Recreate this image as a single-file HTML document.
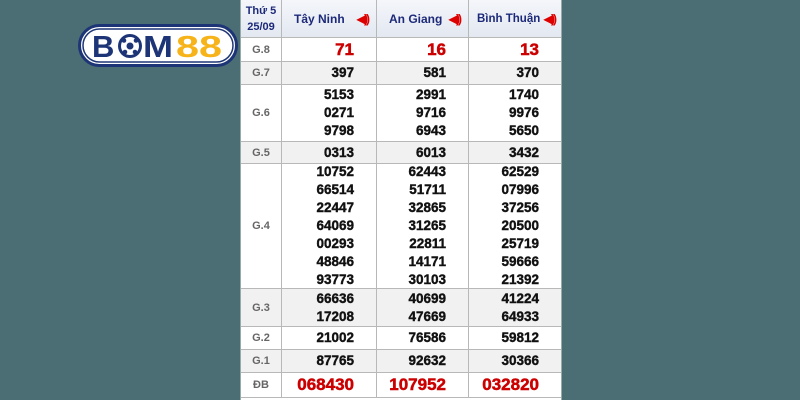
<html><head><style>
body{margin:0;width:800px;height:400px;background:#4b6d74;position:relative;overflow:hidden;font-family:"Liberation Sans",Arial,sans-serif}
.t{position:absolute;left:240px;top:0;width:320px;height:400px;background:#fff;border-left:1px solid #9aa;border-right:1px solid #9aa}
.r{position:absolute;left:0;width:320px;border-bottom:1px solid #b8b8b8;box-sizing:border-box}
.g{background:#f1f1f1}
.c{position:absolute;top:0;bottom:0;border-left:1px solid #b8b8b8;box-sizing:border-box;padding-right:22px;display:flex;align-items:center;justify-content:flex-end}
.c div{text-align:right;font-weight:700;font-size:13.5px;color:#111;line-height:18px;-webkit-text-stroke:0.4px #111}
.l{position:absolute;left:0;width:40px;top:0;bottom:0;display:flex;align-items:center;justify-content:center;font-size:11px;color:#666;font-weight:bold}
.c1{left:40px;width:95px}.c2{left:135px;width:92px}.c3{left:227px;width:93px}
.c div.red{color:#c00;font-size:17px;-webkit-text-stroke:0.5px #c00}
.h{background:linear-gradient(#f4f6fa,#e3e8f1)}
.h .c{justify-content:space-between;padding:0 8px 0 12px;font-size:12px;font-weight:bold;color:#1d2a7a;white-space:nowrap}
.spk{color:#d00;font-size:12px;letter-spacing:-2px}
</style></head><body>
<svg style="position:absolute;left:78px;top:24px" width="160" height="43" viewBox="0 0 160 43">
<rect x="1.5" y="1.5" width="157" height="40" rx="20" fill="#fff" stroke="#1d3576" stroke-width="3"/>
<rect x="5" y="5" width="150" height="33" rx="16.5" fill="none" stroke="#1d3576" stroke-width="1.5"/>
<text x="14" y="33" font-family="Liberation Sans" font-weight="bold" font-size="31" fill="#1d3576">B</text>
<circle cx="52" cy="22" r="12" fill="#1d3576"/><circle cx="52" cy="22" r="9" fill="#fff"/>
<circle cx="52" cy="22" r="3.5" fill="#1d3576"/><circle cx="46" cy="16.5" r="2.3" fill="#1d3576"/><circle cx="58" cy="16.5" r="2.3" fill="#1d3576"/><circle cx="47" cy="28" r="2.3" fill="#1d3576"/><circle cx="57" cy="28" r="2.3" fill="#1d3576"/>
<text x="65" y="33" font-family="Liberation Sans" font-weight="bold" font-size="31" fill="#1d3576" textLength="30" lengthAdjust="spacingAndGlyphs">M</text>
<text x="98" y="33" font-family="Liberation Sans" font-weight="bold" font-size="31" fill="#f6b31a" textLength="46" lengthAdjust="spacingAndGlyphs">88</text>
</svg>
<div class="t">
<div class="r h" style="top:0;height:38px"><div class="l" style="color:#1d2a7a;font-size:11px;text-align:center;line-height:16px">Thứ 5<br>25/09</div>
<div class="c c1">Tây Ninh<span class="spk">◀))</span></div><div class="c c2">An Giang<span class="spk">◀))</span></div><div class="c c3" style="padding-left:8px;padding-right:6px;font-size:11.5px">Bình Thuận<span class="spk">◀))</span></div></div>
<div class="r" style="top:38px;height:24px"><div class="l">G.8</div><div class="c c1"><div class="red">71</div></div><div class="c c2"><div class="red">16</div></div><div class="c c3"><div class="red">13</div></div></div>
<div class="r g" style="top:62px;height:23px"><div class="l">G.7</div><div class="c c1"><div>397</div></div><div class="c c2"><div>581</div></div><div class="c c3"><div>370</div></div></div>
<div class="r" style="top:85px;height:57px"><div class="l">G.6</div><div class="c c1"><div>5153<br>0271<br>9798</div></div><div class="c c2"><div>2991<br>9716<br>6943</div></div><div class="c c3"><div>1740<br>9976<br>5650</div></div></div>
<div class="r g" style="top:142px;height:22px"><div class="l">G.5</div><div class="c c1"><div>0313</div></div><div class="c c2"><div>6013</div></div><div class="c c3"><div>3432</div></div></div>
<div class="r" style="top:164px;height:125px"><div class="l">G.4</div><div class="c c1"><div>10752<br>66514<br>22447<br>64069<br>00293<br>48846<br>93773</div></div><div class="c c2"><div>62443<br>51711<br>32865<br>31265<br>22811<br>14171<br>30103</div></div><div class="c c3"><div>62529<br>07996<br>37256<br>20500<br>25719<br>59666<br>21392</div></div></div>
<div class="r g" style="top:289px;height:38px"><div class="l">G.3</div><div class="c c1"><div>66636<br>17208</div></div><div class="c c2"><div>40699<br>47669</div></div><div class="c c3"><div>41224<br>64933</div></div></div>
<div class="r" style="top:327px;height:23px"><div class="l">G.2</div><div class="c c1"><div>21002</div></div><div class="c c2"><div>76586</div></div><div class="c c3"><div>59812</div></div></div>
<div class="r g" style="top:350px;height:23px"><div class="l">G.1</div><div class="c c1"><div>87765</div></div><div class="c c2"><div>92632</div></div><div class="c c3"><div>30366</div></div></div>
<div class="r" style="top:373px;height:25px"><div class="l">ĐB</div><div class="c c1"><div class="red">068430</div></div><div class="c c2"><div class="red">107952</div></div><div class="c c3"><div class="red">032820</div></div></div>
</div>
</body></html>
